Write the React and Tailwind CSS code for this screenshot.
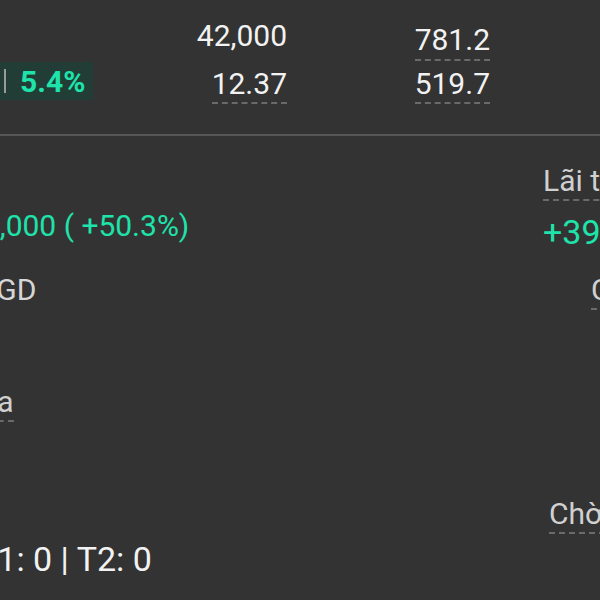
export default function App() {
  const dashed = 'border-b-2 border-dashed border-[#6a6a6a]';

  return (
    <div className="w-[600px] h-[600px] overflow-hidden bg-[#333333] font-['Roboto',sans-serif] text-[30px] whitespace-nowrap">
      {/* Summary rows */}
      <div className="h-[134px] pt-[17px]">
        <div className="grid grid-cols-[110px_177px_203px] grid-rows-[44px_44px]">
          <div />
          <div className="text-right text-[#f2f2f2] leading-[38px]">42,000</div>
          <div className="text-right">
            <span className={`inline-block leading-[38px] text-[#f2f2f2] ${dashed}`}>781.2</span>
          </div>

          <div className="flex items-start pt-[1px]">
            <div className="flex items-center h-[38px] w-[93px] bg-[#213d36] pl-[4px] gap-[14px]">
              <div className="w-[2px] h-[24px] bg-[#9a9a9a]" />
              <span className="font-bold text-[#1ee3aa]">5.4%</span>
            </div>
          </div>
          <div className="text-right">
            <span className={`inline-block leading-[37px] text-[#f2f2f2] ${dashed}`}>12.37</span>
          </div>
          <div className="text-right">
            <span className={`inline-block leading-[37px] text-[#f2f2f2] ${dashed}`}>519.7</span>
          </div>
        </div>
      </div>

      <div className="h-[2px] bg-[#575757]" />

      {/* Position details */}
      <div className="flex">
        <div className="flex-1 flex flex-col items-start pt-[72px]">
          <div className="-ml-[51px] leading-[36px] text-[#1ee3aa]">+15,000 ( +50.3%)</div>
          <div className="-ml-[54px] mt-[28px] leading-[36px] text-[#d6d6d6]">Phí GD</div>
          <div className={`-ml-[105px] mt-[76px] leading-[36px] text-[#d0d0d0] ${dashed}`}>Sức mua</div>
          <div className="-ml-[23px] mt-[117px] leading-[40px] text-[34px] text-[#f2f2f2]">T1: 0 | T2: 0</div>
        </div>

        <div className="w-[57px] flex flex-col items-start pt-[27px]">
          <div className={`leading-[36px] text-[#d0d0d0] ${dashed}`}>Lãi tạm tính</div>
          <div className="mt-[12px] leading-[38px] text-[34px] text-[#1ee3aa]">+39,000</div>
          <div className={`ml-[48px] mt-[21px] leading-[36px] text-[#d0d0d0] ${dashed}`}>Chi tiết</div>
          <div className={`ml-[6px] mt-[186px] leading-[36px] text-[#d0d0d0] ${dashed}`}>Chờ khớp</div>
        </div>
      </div>
    </div>
  );
}
